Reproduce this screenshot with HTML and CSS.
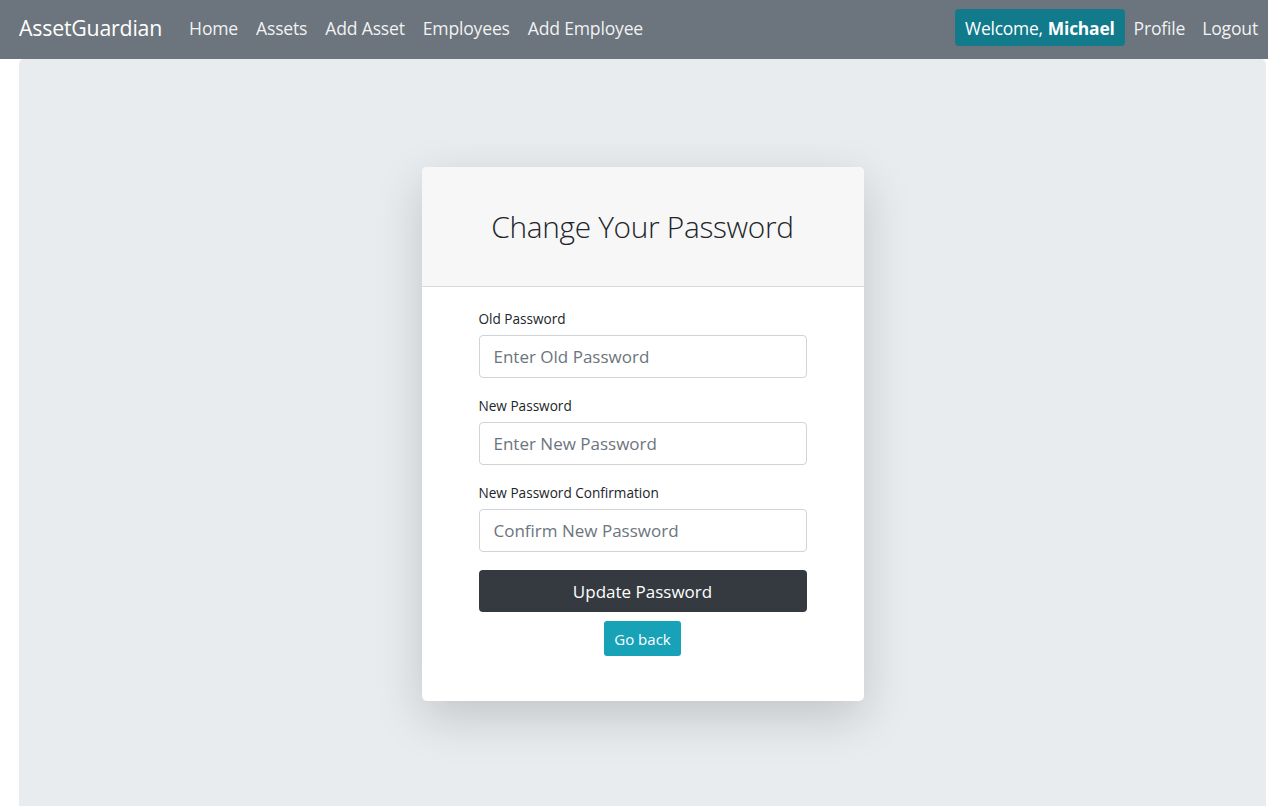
FILE: index.html
```html
<!DOCTYPE html>
<html lang="en">
<head>
<meta charset="utf-8">
<title>Change Password - AssetGuardian</title>
<link rel="stylesheet" href="styles.css">
</head>
<body>
<nav class="navbar">
  <a class="brand" href="#">AssetGuardian</a>
  <ul class="nav-links">
    <li><a href="#">Home</a></li>
    <li><a href="#">Assets</a></li>
    <li><a href="#">Add Asset</a></li>
    <li><a href="#">Employees</a></li>
    <li><a href="#">Add Employee</a></li>
  </ul>
  <ul class="nav-right">
    <li><span class="welcome">Welcome, <strong>Michael</strong></span></li>
    <li><a href="#">Profile</a></li>
    <li><a href="#">Logout</a></li>
  </ul>
</nav>
<main class="jumbo">
  <div class="card">
    <div class="card-header">
      <h1 class="card-title">Change Your Password</h1>
    </div>
    <form class="card-body">
      <div class="form-group">
        <label for="old">Old Password</label>
        <input id="old" type="password" placeholder="Enter Old Password">
      </div>
      <div class="form-group">
        <label for="new1">New Password</label>
        <input id="new1" type="password" placeholder="Enter New Password">
      </div>
      <div class="form-group">
        <label for="new2">New Password Confirmation</label>
        <input id="new2" type="password" placeholder="Confirm New Password">
      </div>
      <button type="submit" class="btn-dark">Update Password</button>
      <div class="back-row"><a class="btn-info" href="#">Go back</a></div>
    </form>
  </div>
</main>
</body>
</html>
```

FILE: styles.css
```css
* { box-sizing: border-box; }
html, body { margin: 0; padding: 0; }
body {
  font-family: "Open Sans", "Noto Sans", sans-serif;
  background: #ffffff;
  color: #212529;
  height: 806px;
  overflow: hidden;
}
a { text-decoration: none; }
ul { list-style: none; margin: 0; padding: 0; }

.navbar {
  display: flex;
  align-items: center;
  height: 59px;
  background: #6c757d;
  padding: 0 10px 4px 19px;
}
.brand {
  color: #fff;
  font-size: 21.3px;
  margin-right: 27px;
  letter-spacing: -0.2px;
}
.nav-links, .nav-right {
  display: flex;
  align-items: center;
  gap: 18px;
}
.nav-links a, .nav-right a {
  color: rgba(255,255,255,0.92);
  font-size: 17.6px;
  letter-spacing: -0.2px;
}
.nav-right { margin-left: auto; gap: 9px; }
.nav-right li + li + li { margin-left: 8px; }
.welcome {
  display: inline-flex;
  align-items: center;
  height: 37px;
  padding: 0 10px;
  background: #117a8b;
  border-radius: 4px;
  color: #fff;
  font-size: 17.4px;
  letter-spacing: -0.2px;
}
.welcome strong { font-weight: 700; margin-left: 5px; }

.jumbo {
  margin: 0 2px 0 19px;
  background: #e9ecef;
  border-radius: 5px 5px 0 0;
  height: 747px;
  padding-top: 108px;
  display: flex;
  justify-content: center;
  align-items: flex-start;
}
.card {
  width: 442px;
  background: #fff;
  border-radius: 5px;
  box-shadow: 0 16px 48px rgba(0,0,0,0.17);
  overflow: hidden;
}
.card-header {
  height: 120px;
  background: #f7f7f7;
  border-bottom: 1px solid #dadada;
  display: flex;
  align-items: center;
  justify-content: center;
}
.card-title {
  margin: 0;
  font-weight: 300;
  font-size: 29.8px;
  color: #212529;
  letter-spacing: -0.3px;
}
.card-body {
  padding: 22px 57px 45px;
  margin: 0;
}
.form-group { margin-bottom: 18px; }
.form-group label {
  display: block;
  font-size: 13.6px;
  line-height: 20px;
  margin-bottom: 6px;
  color: #212529;
}
.form-group input {
  display: block;
  width: 100%;
  height: 43px;
  border: 1px solid #ced4da;
  border-radius: 4px;
  padding: 0 14px;
  font-family: inherit;
  font-size: 17px;
  color: #495057;
  background: #fff;
}
.form-group input::placeholder { color: #6c757d; opacity: 1; }
.btn-dark {
  display: block;
  width: 100%;
  height: 42px;
  border: none;
  border-radius: 4px;
  background: #343a40;
  color: #fff;
  font-family: inherit;
  font-size: 17px;
}
.back-row {
  display: flex;
  justify-content: center;
  margin-top: 9px;
}
.btn-info {
  display: inline-flex;
  align-items: center;
  height: 35px;
  padding: 0 10px;
  background: #17a2b8;
  color: #fff;
  border-radius: 3px;
  font-size: 15px;
}
```
